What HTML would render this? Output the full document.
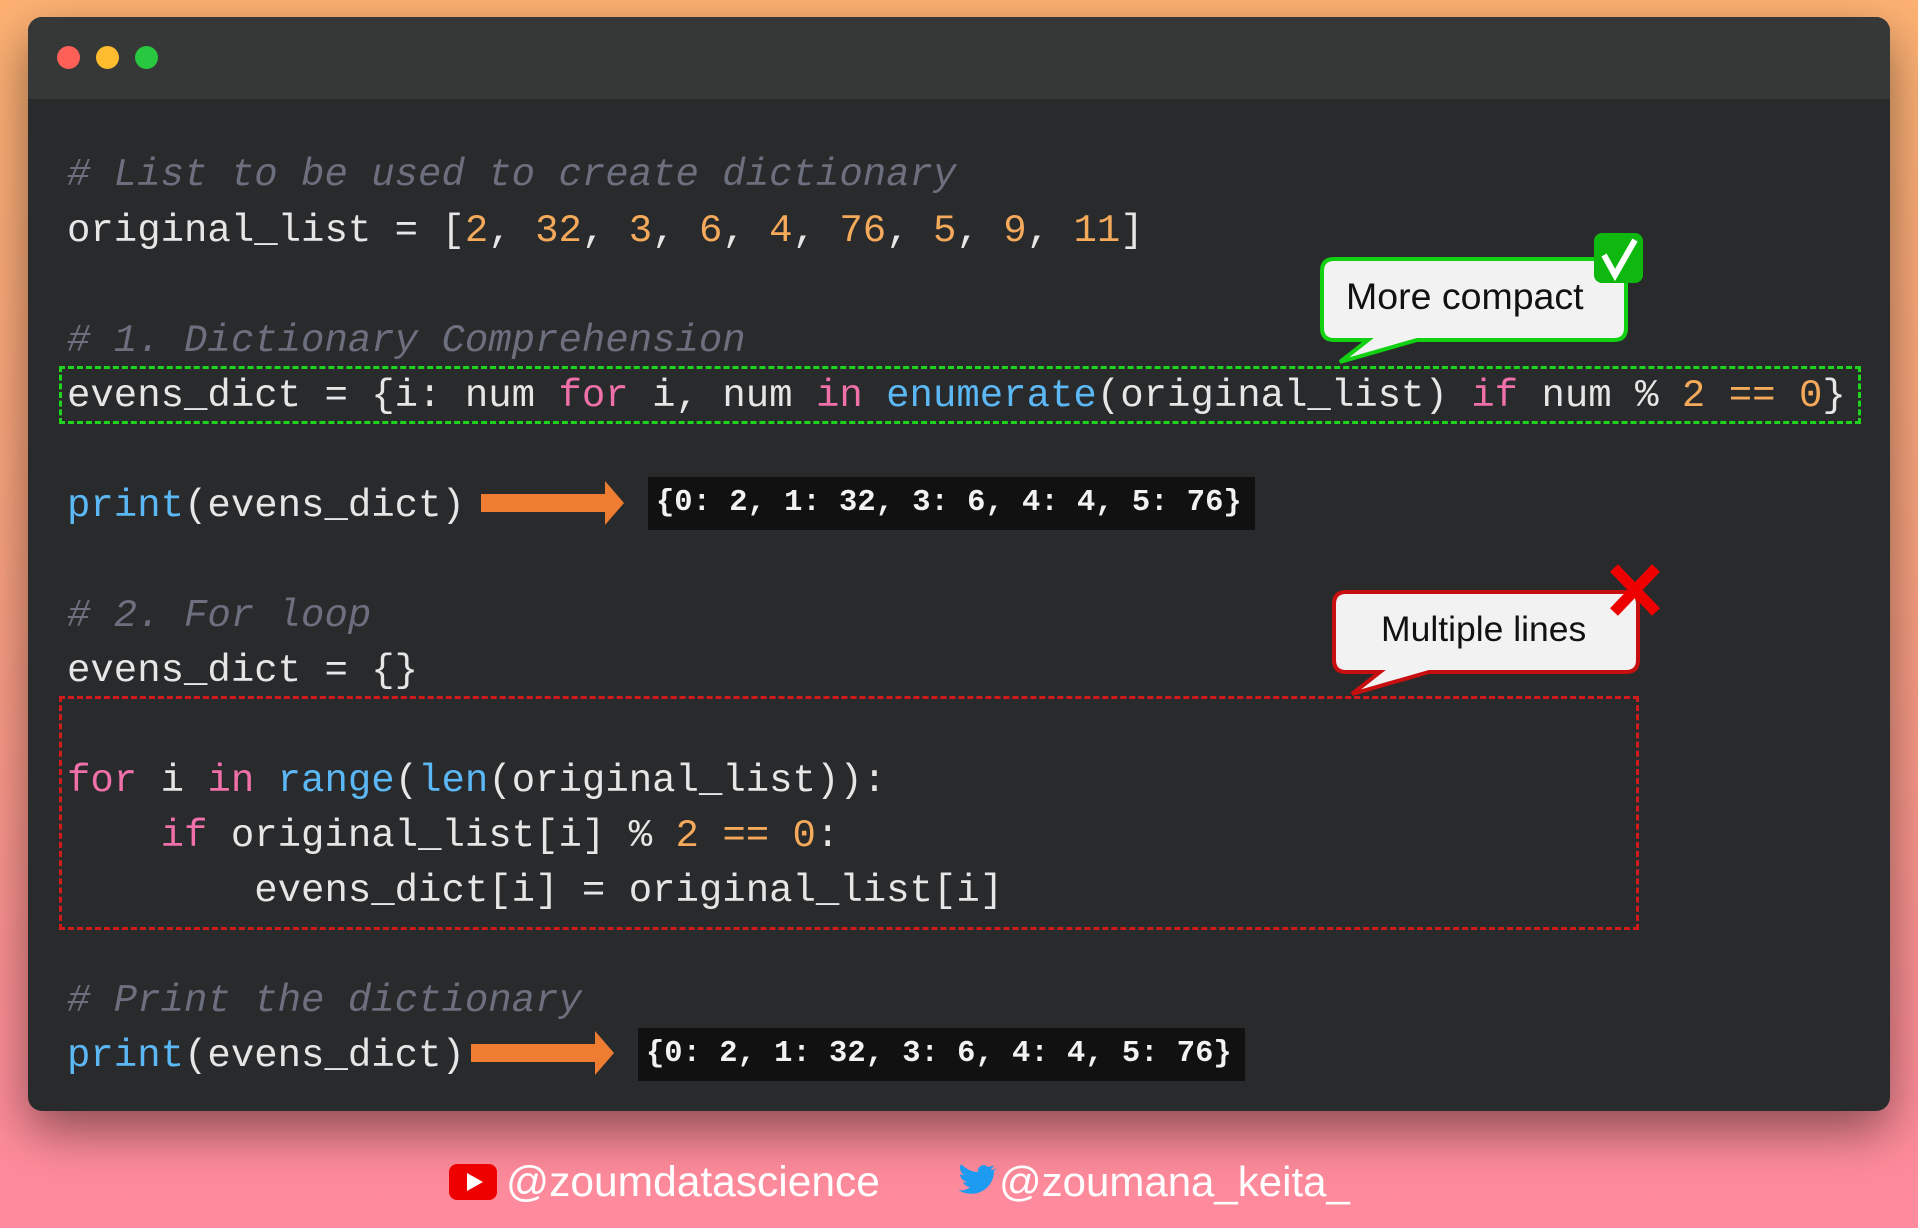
<!DOCTYPE html>
<html><head><meta charset="utf-8"><style>
*{margin:0;padding:0;box-sizing:border-box}
body{width:1918px;height:1228px;overflow:hidden;position:relative;background:linear-gradient(180deg,#fdb272 0%,#f9a27f 45%,#fb8f93 80%,#ff8a9e 100%);font-family:"Liberation Sans",sans-serif}
.win{position:absolute;left:28px;top:17px;width:1862px;height:1094px;background:#282a2c;border-radius:14px;box-shadow:0 20px 50px rgba(0,0,0,.45);overflow:hidden}
.tb{position:absolute;left:0;top:0;right:0;height:82px;background:#363737}
.dot{position:absolute;top:29px;width:23px;height:23px;border-radius:50%}
.l{position:absolute;left:67px;font-family:"Liberation Mono",monospace;font-size:39px;white-space:pre;color:#e6e6e6;line-height:50px;height:50px}
.c{color:#6c707e;font-style:italic}
.n{color:#f5a95b}.k{color:#f070a9}.b{color:#5cb8f5}
.out{position:absolute;background:#111;color:#f2f2f2;font-family:"Liberation Mono",monospace;font-weight:bold;font-size:30.5px;line-height:53px;padding-left:8px;white-space:pre}
</style></head><body>
<div class="win"><div class="tb">
<div class="dot" style="left:29px;background:#fe5f57"></div>
<div class="dot" style="left:68px;background:#febc2e"></div>
<div class="dot" style="left:107px;background:#28c840"></div>
</div></div>
<div class="l c" style="top:150px"># List to be used to create dictionary</div>
<div class="l" style="top:206px">original_list = [<span class="n">2</span>, <span class="n">32</span>, <span class="n">3</span>, <span class="n">6</span>, <span class="n">4</span>, <span class="n">76</span>, <span class="n">5</span>, <span class="n">9</span>, <span class="n">11</span>]</div>
<div class="l c" style="top:316px"># 1. Dictionary Comprehension</div>
<div class="l" style="top:371px">evens_dict = {i: num <span class="k">for</span> i, num <span class="k">in</span> <span class="b">enumerate</span>(original_list) <span class="k">if</span> num % <span class="n">2</span> <span class="n">==</span> <span class="n">0</span>}</div>
<div class="l" style="top:481px"><span class="b">print</span>(evens_dict)</div>
<div class="l c" style="top:591px"># 2. For loop</div>
<div class="l" style="top:646px">evens_dict = {}</div>
<div class="l" style="top:756px"><span class="k">for</span> i <span class="k">in</span> <span class="b">range</span>(<span class="b">len</span>(original_list)):</div>
<div class="l" style="top:811px">    <span class="k">if</span> original_list[i] % <span class="n">2</span> <span class="n">==</span> <span class="n">0</span>:</div>
<div class="l" style="top:866px">        evens_dict[i] = original_list[i]</div>
<div class="l c" style="top:976px"># Print the dictionary</div>
<div class="l" style="top:1031px"><span class="b">print</span>(evens_dict)</div>

<div style="position:absolute;left:59px;top:366px;width:1802px;height:58px;border:3px dashed #1fd41f"></div>
<div style="position:absolute;left:59px;top:696px;width:1580px;height:234px;border:3px dashed #d11a1a"></div>

<div class="out" style="left:648px;top:477px;width:607px">{0: 2, 1: 32, 3: 6, 4: 4, 5: 76}</div>
<div class="out" style="left:638px;top:1028px;width:607px">{0: 2, 1: 32, 3: 6, 4: 4, 5: 76}</div>

<svg style="position:absolute;left:0;top:0" width="1918" height="1228">
<path d="M481 494H605V481L624 503L605 525V512H481Z" fill="#ee7d31"/>
<path d="M471 1044H595V1031L614 1053L595 1075V1062H471Z" fill="#ee7d31"/>
<path d="M1332 259H1614Q1626 259 1626 271V328Q1626 340 1614 340H1417L1340 362L1368 340H1334Q1322 340 1322 328V271Q1322 259 1334 259Z" fill="#f2f2f2" stroke="#12d012" stroke-width="4"/>
<rect x="1594" y="233" width="49" height="50" rx="8" fill="#0fb80f"/>
<path d="M1604 255L1615 275L1635 240" fill="none" stroke="#fff" stroke-width="6"/>
<path d="M1346 592H1626Q1638 592 1638 604V660Q1638 672 1626 672H1429L1352 694L1380 672H1346Q1334 672 1334 660V604Q1334 592 1346 592Z" fill="#f2f2f2" stroke="#c80f0f" stroke-width="4"/>
<path d="M1614 568L1656 612M1656 568L1614 612" stroke="#ee0000" stroke-width="11"/>
<rect x="449" y="1164" width="48" height="36" rx="8" fill="#ee0000"/>
<path d="M467 1173L483 1182L467 1191Z" fill="#fff"/>
<path d="M997 1167c-2 1-4 1-5 1 2-1 3-3 4-5-2 1-4 2-6 2-4-4-11-1-10 5-7 0-13-4-17-8-2 4-1 8 3 11-1 0-3 0-4-1 0 4 3 7 7 8-1 0-3 1-4 0 1 3 4 5 7 5-3 3-8 4-12 3 17 10 36-1 36-19 1-1 2-2 3-3z" fill="#1d9bf0" transform="translate(-2,2)"/>
<text x="506" y="1196" font-family="Liberation Sans,sans-serif" font-size="42.5" fill="#fff">@zoumdatascience</text>
<text x="999" y="1196" font-family="Liberation Sans,sans-serif" font-size="42" fill="#fff">@zoumana_keita_</text>
<text x="1346" y="309" font-family="Liberation Sans,sans-serif" font-size="37.5" fill="#111">More compact</text>
<text x="1381" y="641" font-family="Liberation Sans,sans-serif" font-size="35.5" fill="#111">Multiple lines</text>
</svg>
</body></html>
